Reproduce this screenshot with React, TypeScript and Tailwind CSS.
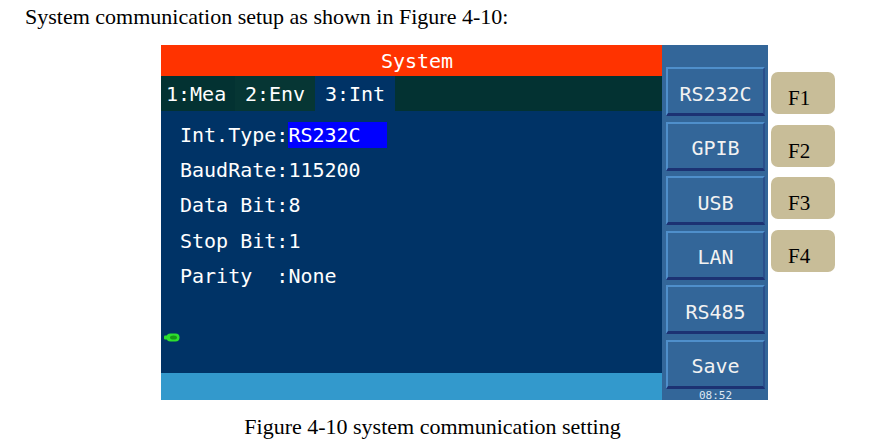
import React from "react";

const mono = { fontFamily: '"DejaVu Sans Mono", monospace' };

const sideKeys = ["RS232C", "GPIB", "USB", "LAN", "RS485", "Save"];
const fKeys = ["F1", "F2", "F3", "F4"];

const rows: [string, string][] = [
  ["Int.Type:", "RS232C"],
  ["BaudRate:", "115200"],
  ["Data Bit:", "8"],
  ["Stop Bit:", "1"],
  ["Parity  :", "None"],
];

function UsbIcon() {
  return (
    <svg width="16" height="9" viewBox="0 0 16 9">
      <rect x="0" y="2.5" width="4" height="4" rx="1" fill="#2ee02e" />
      <rect x="2.5" y="0.5" width="13" height="8" rx="4" fill="#2ee02e" />
      <ellipse cx="9.5" cy="4.5" rx="3.5" ry="2" fill="#169a16" />
    </svg>
  );
}

export default function App() {
  return (
    <div className="w-[871px] h-[444px] bg-white overflow-hidden" style={{ fontFamily: '"Liberation Serif", serif' }}>
      <p className="h-[45px] pl-[25px] pt-[4px] text-[22px] leading-[25px] text-black">
        System communication setup as shown in Figure 4-10:
      </p>

      <div className="flex items-start">
        {/* instrument screen */}
        <div className="ml-[161px] flex h-[355px]" style={mono}>
          <div className="w-[501px] flex flex-col">
            <div className="h-[31px] bg-[#ff3300] text-white text-[20px] flex items-center justify-center pl-[11px]">
              System
            </div>
            <div className="h-[35px] bg-[#033232] flex text-white text-[20px]">
              <div className="w-[74px] flex items-center pl-[5px]">1:Mea</div>
              <div className="w-[80px] flex items-center justify-center bg-[#063634]">2:Env</div>
              <div className="w-[80px] flex items-center justify-center bg-[#003366]">3:Int</div>
            </div>
            <div className="flex-1 bg-[#003366] flex flex-col">
              <div className="pl-[19px] pt-[11px] flex flex-col gap-[9.2px] text-white text-[20px]">
                {rows.map(([label, value], i) => (
                  <div key={label} className="h-[26px] flex items-center whitespace-pre">
                    <span>{label}</span>
                    {i === 0 ? (
                      <span className="bg-[#0000ff] w-[99px] h-[26px] flex items-center">{value}</span>
                    ) : (
                      <span>{value}</span>
                    )}
                  </div>
                ))}
              </div>
              <div className="pl-[3px] mt-[44px]">
                <UsbIcon />
              </div>
            </div>
            <div className="h-[27px] bg-[#3399cc]" />
          </div>

          <div className="w-[106px] bg-[#336699] flex flex-col pt-[22px] pl-[4px] pr-[3px]">
            <div className="flex flex-col gap-[5.6px]">
              {sideKeys.map((k) => (
                <div
                  key={k}
                  className="h-[49px] bg-[#336699] border-t-2 border-l-2 border-t-[#4f8fcb] border-l-[#4f8fcb] border-r-2 border-r-[#2a4f8c] border-b-[3px] border-b-[#1c3273] text-[#f2f2f2] text-[20px] flex items-center justify-center pt-[5px]"
                >
                  {k}
                </div>
              ))}
            </div>
            <div className="text-[11px] leading-[12px] text-[#dfe8f2] text-center pt-[1px]">08:52</div>
          </div>
        </div>

        {/* front panel keys */}
        <div className="ml-[3px] pt-[27px] flex flex-col gap-[10.7px]">
          {fKeys.map((f) => (
            <div
              key={f}
              className="w-[64px] h-[42px] rounded-[7px] bg-[#c8bd98] text-black text-[21px] leading-none flex items-end pl-[17px] pb-[5px]"
            >
              {f}
            </div>
          ))}
        </div>
      </div>

      <p className="text-center pr-[6px] pt-[14px] text-[22px] leading-[25px] text-black">
        Figure 4-10 system communication setting
      </p>
    </div>
  );
}
